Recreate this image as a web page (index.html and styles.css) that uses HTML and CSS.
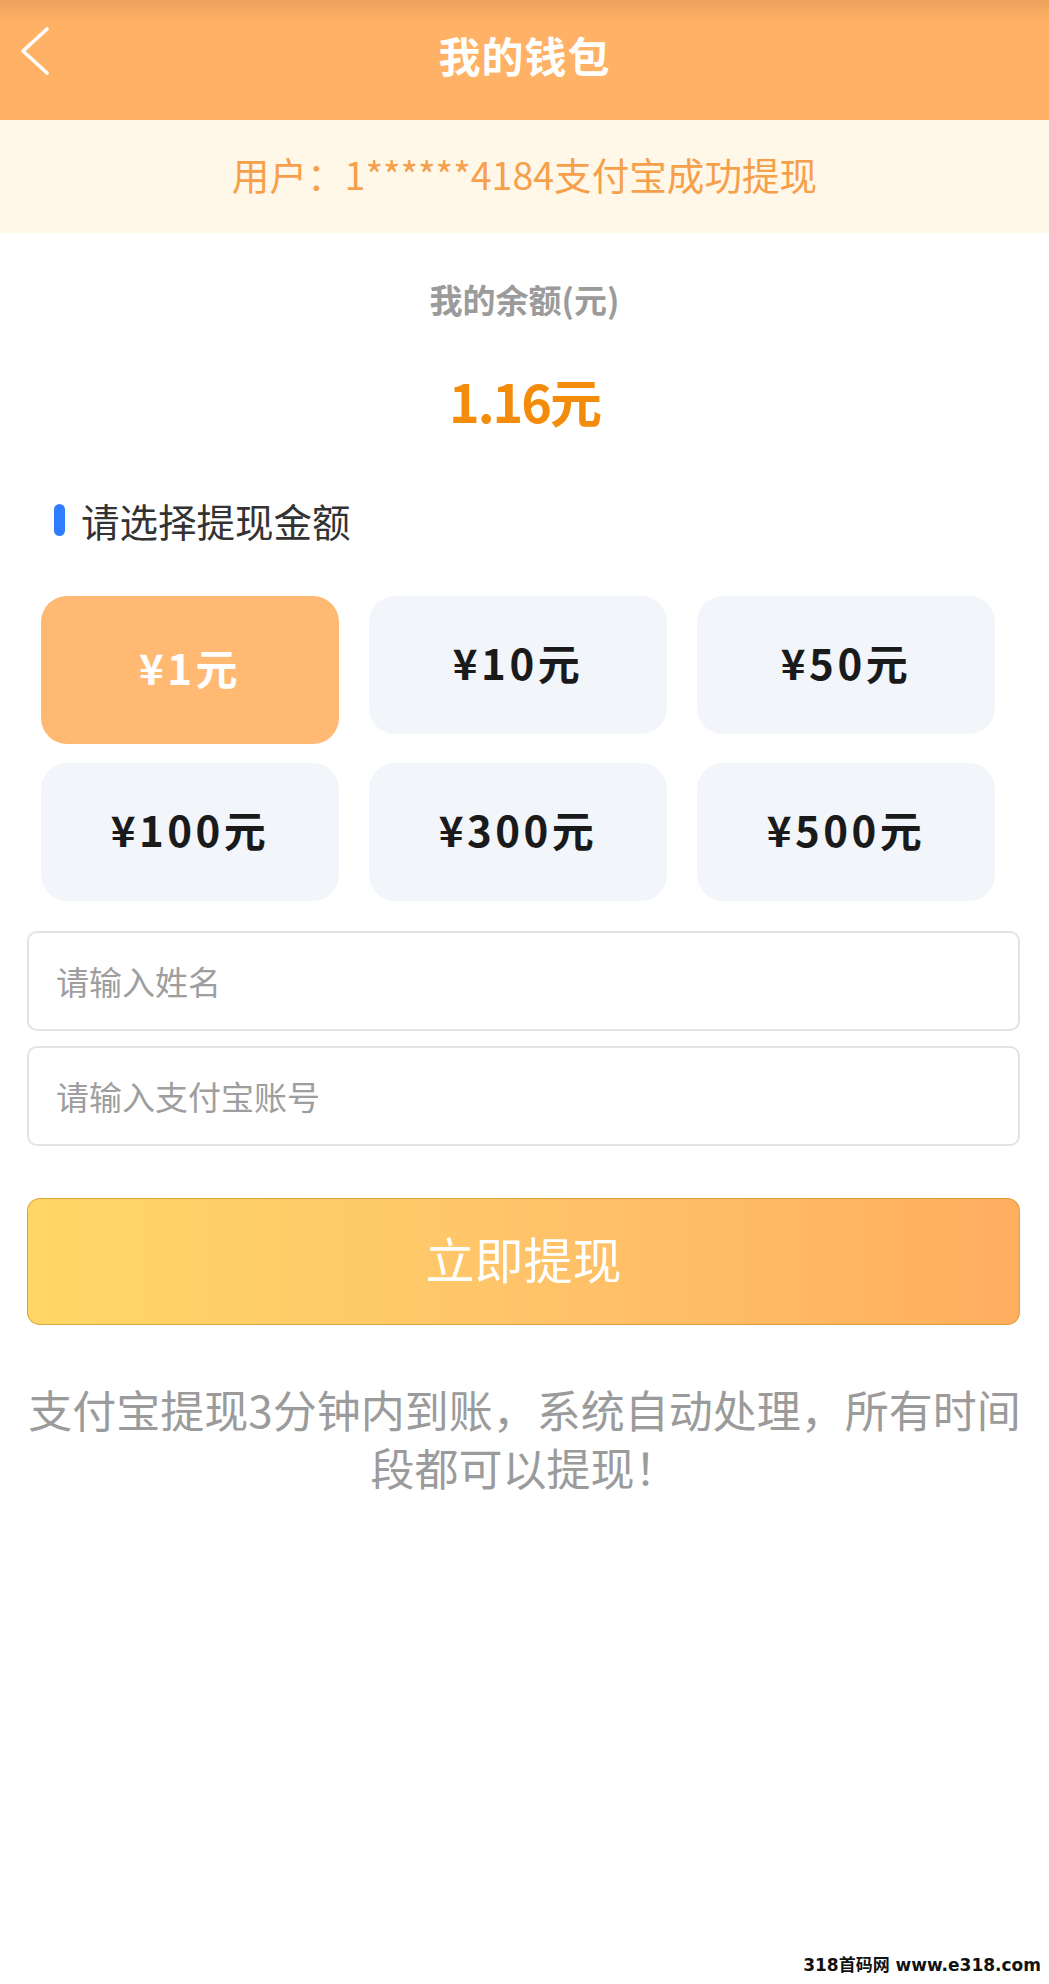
FILE: index.html
```html
<!DOCTYPE html>
<html lang="zh-CN">
<head>
<meta charset="utf-8">
<title>我的钱包</title>
<link rel="stylesheet" href="styles.css">
</head>
<body>
<div class="page">
  <header class="topbar">
    <div class="back">
      <svg width="60" height="120" viewBox="0 0 60 120" aria-hidden="true">
        <polyline points="47,29 23,51 47,73" fill="none" stroke="#ffffff" stroke-width="3.6" stroke-linecap="round" stroke-linejoin="round"/>
      </svg>
    </div>
    <h1 class="title">我的钱包</h1>
    <div></div>
  </header>

  <div class="notice">用户：1******4184支付宝成功提现</div>

  <section class="balance">
    <div class="balance-label">我的余额(元)</div>
    <div class="balance-value">1.16元</div>
  </section>

  <div class="section-title"><span class="bar"></span><span>请选择提现金额</span></div>

  <div class="amounts">
    <div class="amount selected">¥1元</div>
    <div class="amount">¥10元</div>
    <div class="amount">¥50元</div>
    <div class="amount">¥100元</div>
    <div class="amount">¥300元</div>
    <div class="amount">¥500元</div>
  </div>

  <div class="form">
    <input class="field" type="text" placeholder="请输入姓名">
    <input class="field" type="text" placeholder="请输入支付宝账号">
  </div>

  <button class="submit">立即提现</button>

  <p class="tip">支付宝提现3分钟内到账，系统自动处理，所有时间段都可以提现！</p>

  <div class="watermark">318首码网 www.e318.com</div>
</div>
</body>
</html>
```

FILE: styles.css
```css
* { box-sizing: border-box; }
html, body { margin: 0; padding: 0; background: #ffffff; }
body {
  font-family: "Noto Sans CJK SC", "Noto Sans", sans-serif;
  width: 1049px;
  min-height: 1984px;
}
.page {
  position: relative;
  width: 1049px;
  min-height: 1984px;
  background: #ffffff;
}
.topbar {
  height: 120px;
  display: grid;
  grid-template-columns: 1fr auto 1fr;
  align-items: center;
  background: linear-gradient(to bottom, #eca25d 0px, #f7ab62 12px, #ffb165 22px, #ffb165 100%);
}
.back { height: 120px; display: flex; align-items: flex-start; }
.back svg { display: block; }
.title {
  margin: 0;
  color: #ffffff;
  font-size: 42px;
  font-weight: 700;
  line-height: 50px;
  margin-top: -10px;
  letter-spacing: 1px;
}
.notice {
  height: 113px;
  background: #fff8e9;
  color: #f6a04b;
  font-size: 37.6px;
  display: flex;
  align-items: center;
  justify-content: center;
  padding-bottom: 6px;
}
.balance {
  display: flex;
  flex-direction: column;
  align-items: center;
  padding-top: 46px;
}
.balance-label {
  font-size: 33px;
  line-height: 40px;
  font-weight: 700;
  color: #9b9b9b;
}
.balance-value {
  margin-top: 52px;
  font-size: 52px;
  line-height: 60px;
  font-weight: 700;
  color: #f38c0b;
  letter-spacing: -2px;
}
.section-title {
  margin-top: 68px;
  padding-left: 54px;
  display: flex;
  align-items: center;
  gap: 16px;
  font-size: 38.5px;
  line-height: 42px;
  color: #333333;
}
.section-title .bar {
  width: 11px;
  height: 32px;
  border-radius: 6px;
  background: #2f7cff;
}
.amounts {
  margin-top: 55px;
  padding-left: 41px;
  display: grid;
  grid-template-columns: repeat(3, 298px);
  grid-auto-rows: 138px;
  column-gap: 30px;
  row-gap: 29px;
  align-items: start;
}
.amount {
  height: 138px;
  border-radius: 26px;
  background: #f2f5fa;
  color: #1a1a1a;
  font-size: 42px;
  font-weight: 700;
  letter-spacing: 3.5px;
  display: flex;
  align-items: center;
  justify-content: center;
  padding-bottom: 8px;
}
.amount.selected {
  height: 148px;
  background: #ffb972;
  color: #ffffff;
}
.form {
  margin-top: 30px;
  padding-left: 27px;
  display: flex;
  flex-direction: column;
  gap: 15px;
}
.field {
  width: 993px;
  height: 100px;
  border: 2px solid #e3e3e3;
  border-radius: 10px;
  padding: 0 27px;
  font-family: "Noto Sans CJK SC", "Noto Sans", sans-serif;
  font-size: 33px;
  color: #333333;
  background: #ffffff;
  outline: none;
}
.field::placeholder { color: #9e9e9e; }
.submit {
  display: block;
  margin: 52px 0 0 27px;
  width: 993px;
  height: 127px;
  border: 1.5px solid rgba(210, 150, 40, 0.75);
  border-radius: 13px;
  background: linear-gradient(to right, #fed766, #ffc66a 45%, #ffae5f);
  color: #ffffff;
  font-family: "Noto Sans CJK SC", "Noto Sans", sans-serif;
  font-size: 49px;
  padding: 0 0 8px;
  cursor: pointer;
}
.tip {
  margin: 55px 0 0;
  padding: 0 27px;
  text-align: center;
  font-size: 44px;
  line-height: 58px;
  color: #9b9b9b;
}
.watermark {
  position: absolute;
  right: 8px;
  bottom: 8px;
  font-family: "DejaVu Sans", "Noto Sans CJK SC", sans-serif;
  font-size: 17px;
  font-weight: 700;
  color: #111111;
  text-shadow: 0 0 2px #ffffff;
}
```
